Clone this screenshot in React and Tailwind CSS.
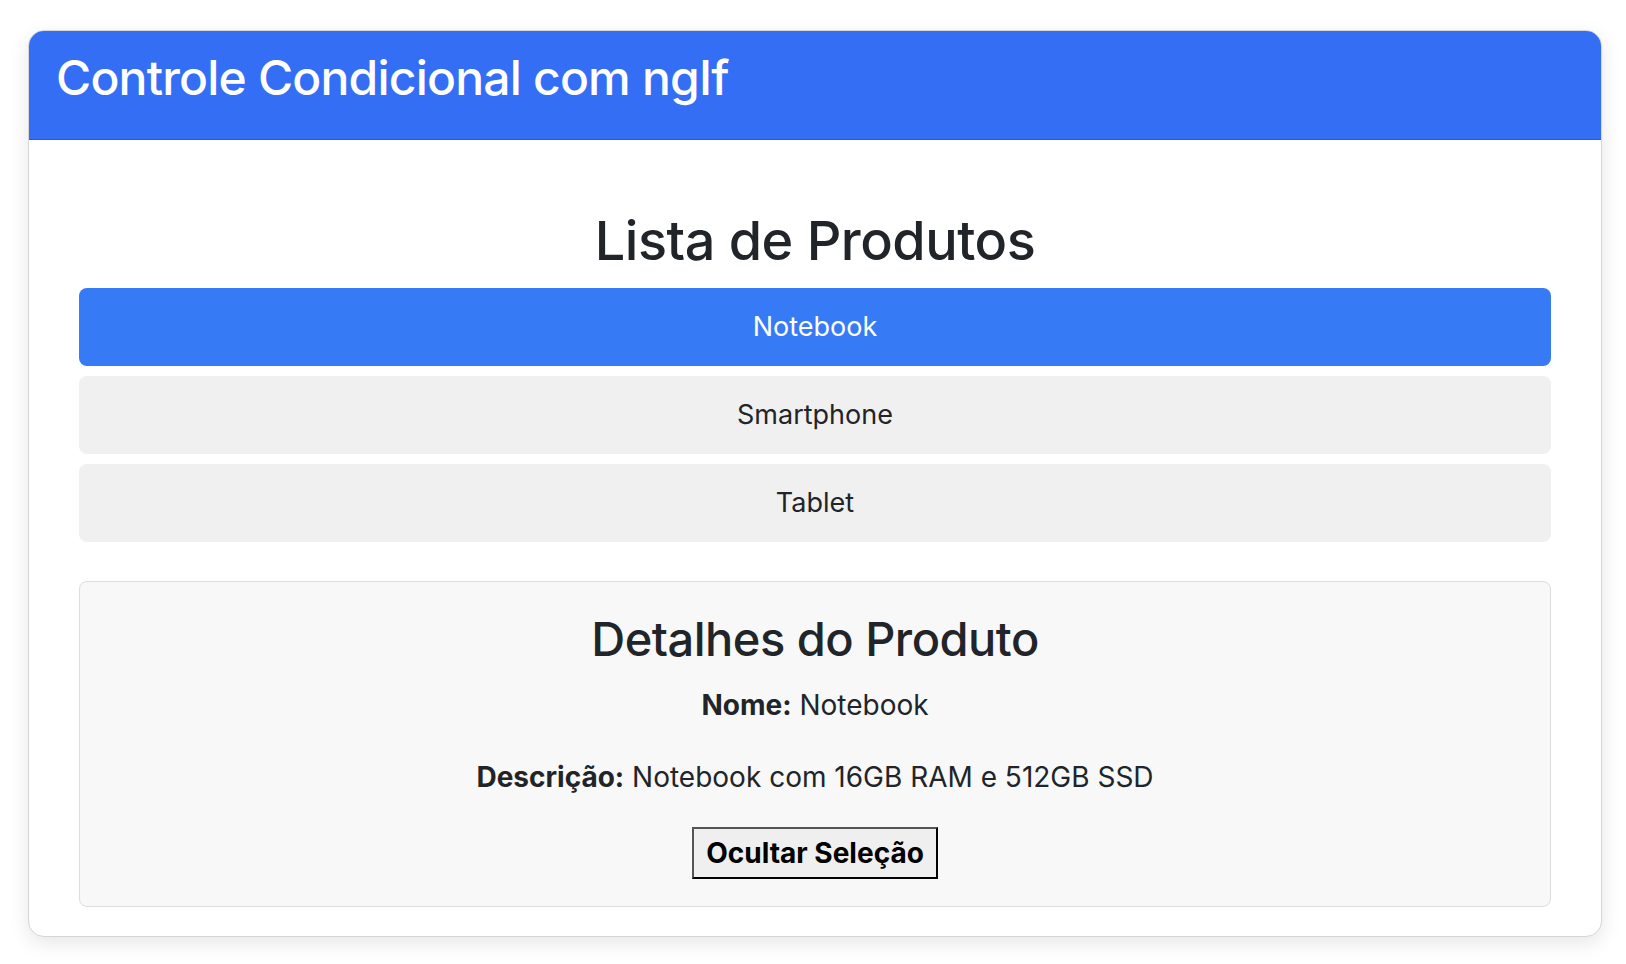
import { useState } from 'react';

const produtos = [
  { nome: 'Notebook', descricao: 'Notebook com 16GB RAM e 512GB SSD' },
  { nome: 'Smartphone', descricao: 'Smartphone com 128GB e câmera de 48MP' },
  { nome: 'Tablet', descricao: 'Tablet com tela de 10 polegadas' }
];

export default function App() {
  const [selecionado, setSelecionado] = useState(produtos[0]);

  return (
    <div
      className="min-h-screen bg-white pt-[30px] pl-[28px] text-[#212529]"
      style={{ fontFamily: 'Inter, "Noto Sans", sans-serif' }}
    >
      <div className="w-[1574px] rounded-[16px] border border-[#d6d6d6] bg-white overflow-hidden shadow-[0_6px_20px_rgba(0,0,0,0.10)]">
        {/* Header */}
        <div className="h-[109px] bg-[#346ef4] border-b border-[#2b5fd6] flex items-center px-[27px] pb-[14px]">
          <h1 className="text-white text-[48px] font-medium leading-none tracking-[-0.8px]">
            Controle Condicional com ngIf
          </h1>
        </div>

        {/* Body */}
        <div className="px-[50px] pt-[69px] pb-[29px]">
          <h2 className="text-center text-[54px] font-medium leading-[1.2] mb-[14px] tracking-[-0.5px]">
            Lista de Produtos
          </h2>

          <ul className="flex flex-col gap-[10px]">
            {produtos.map((p) => {
              const ativo = selecionado && selecionado.nome === p.nome;
              return (
                <li
                  key={p.nome}
                  onClick={() => setSelecionado(p)}
                  className={`h-[78px] rounded-[8px] flex items-center justify-center text-[27px] cursor-pointer ${
                    ativo ? 'bg-[#377af6] text-white' : 'bg-[#f0f0f0] text-[#212529]'
                  }`}
                >
                  {p.nome}
                </li>
              );
            })}
          </ul>

          {selecionado && (
            <div className="mt-[39px] rounded-[8px] border border-[#dcdcdc] bg-[#f8f8f8] pt-[29px] pb-[27px] flex flex-col items-center">
              <h3 className="text-[47px] font-medium leading-[1.2] mb-[18px] tracking-[-0.5px]">
                Detalhes do Produto
              </h3>
              <p className="text-[28px] leading-[40px] mb-[32px]">
                <strong className="font-bold">Nome:</strong> {selecionado.nome}
              </p>
              <p className="text-[28px] leading-[40px] mb-[30px]">
                <strong className="font-bold">Descrição:</strong> {selecionado.descricao}
              </p>
              <button
                onClick={() => setSelecionado(null)}
                className="h-[52px] px-[12px] bg-[#efefef] border-2 border-t-[#555] border-l-[#555] border-b-black border-r-black text-black text-[28px] font-bold"
              >
                Ocultar Seleção
              </button>
            </div>
          )}
        </div>
      </div>
    </div>
  );
}
